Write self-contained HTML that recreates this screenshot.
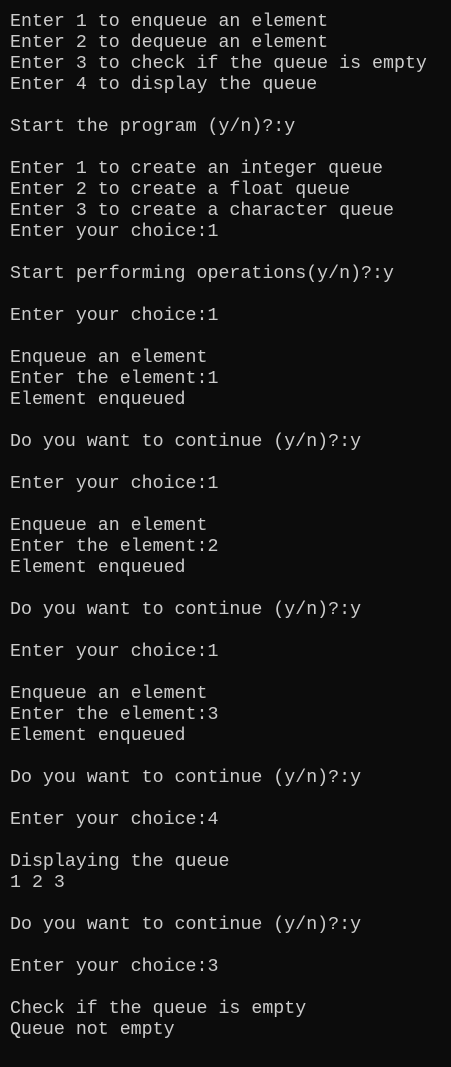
<!DOCTYPE html>
<html><head><meta charset="utf-8"><style>
html,body{margin:0;padding:0;background:#0c0c0c;}
body{width:451px;height:1067px;overflow:hidden;}
pre{margin:0;padding:12px 0 0 10px;font-family:"Liberation Mono","DejaVu Sans Mono",monospace;font-size:18.3px;line-height:21px;color:#cccccc;white-space:pre;}
</style></head><body><pre>Enter 1 to enqueue an element
Enter 2 to dequeue an element
Enter 3 to check if the queue is empty
Enter 4 to display the queue

Start the program (y/n)?:y

Enter 1 to create an integer queue
Enter 2 to create a float queue
Enter 3 to create a character queue
Enter your choice:1

Start performing operations(y/n)?:y

Enter your choice:1

Enqueue an element
Enter the element:1
Element enqueued

Do you want to continue (y/n)?:y

Enter your choice:1

Enqueue an element
Enter the element:2
Element enqueued

Do you want to continue (y/n)?:y

Enter your choice:1

Enqueue an element
Enter the element:3
Element enqueued

Do you want to continue (y/n)?:y

Enter your choice:4

Displaying the queue
1 2 3

Do you want to continue (y/n)?:y

Enter your choice:3

Check if the queue is empty
Queue not empty</pre></body></html>
